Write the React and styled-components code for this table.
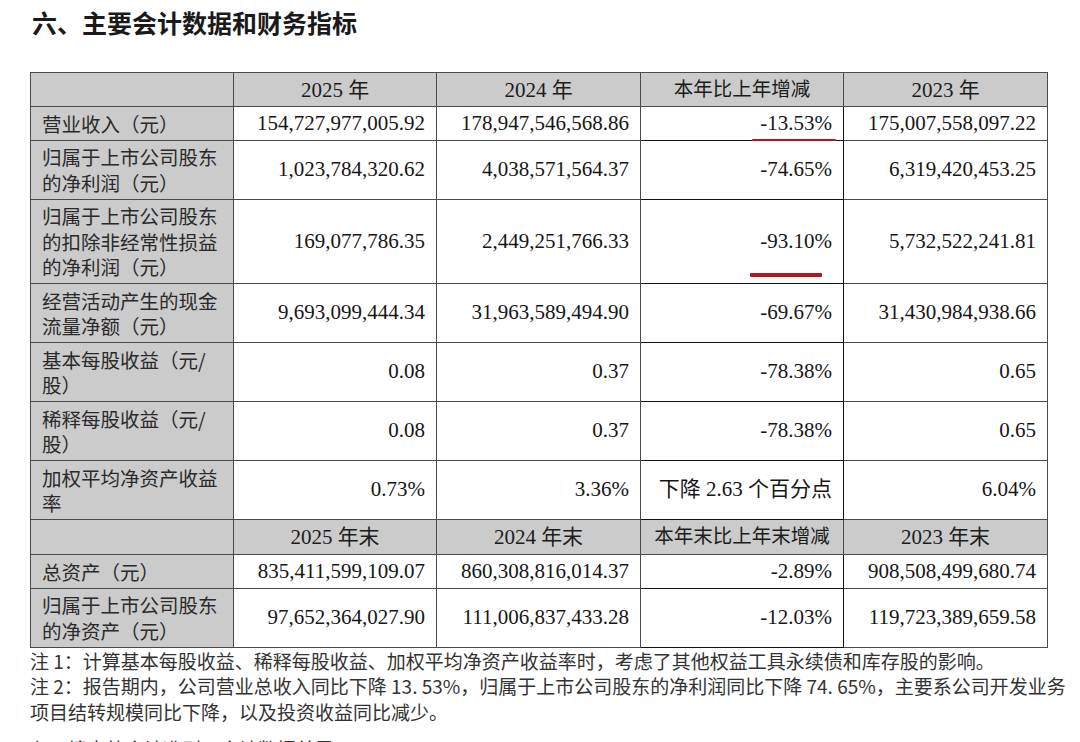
import styled, { createGlobalStyle } from 'styled-components';

const GlobalStyle = createGlobalStyle`
  html, body {
    margin: 0;
    padding: 0;
    background: #ffffff;
    overflow: hidden;
  }
`

const Page = styled.div`
  width: 1080px;
  height: 742px;
  overflow: hidden;
  padding: 0 33px 0 30px;
  box-sizing: border-box;
  font-family: "Liberation Serif", "Noto Sans CJK SC", serif;
  color: #161616;
`

const Title = styled.h1`
  margin: 0;
  padding: 6px 0 0 2px;
  height: 72px;
  box-sizing: border-box;
  font-family: "Noto Sans CJK SC", sans-serif;
  font-size: 25px;
  line-height: 32px;
  font-weight: 700;
  color: #1a1a1a;
`

const Table = styled.table`
  width: 1017px;
  border-collapse: collapse;
  table-layout: fixed;
  font-size: 21px;
`

const HeadCell = styled.th`
  background: #cbcbcb;
  border: 1px solid #4a4a4a;
  font-weight: 400;
  font-size: ${p => (p.$cn ? '19.5px' : '21px')};
  text-align: center;
  line-height: 26px;
  height: ${p => p.$h}px;
  box-sizing: border-box;
  padding: 3px 8px;
  color: #1c1c1c;
  white-space: nowrap;
`

const LabelCell = styled.td`
  background: #cbcbcb;
  border: 1px solid #4a4a4a;
  text-align: left;
  font-family: "Noto Sans CJK SC", sans-serif;
  font-size: 19.5px;
  line-height: 25.5px;
  padding: 3.5px 6px 3.5px 11px;
  color: #2a2a2a;
  white-space: nowrap;
`

const LabelLine = styled.div`
  height: 25.5px;
`

const NumCell = styled.td`
  position: relative;
  background: #ffffff;
  border: 1px solid ${p => (p.$dark ? '#111' : '#4a4a4a')};
  text-align: right;
  vertical-align: middle;
  line-height: 25.5px;
  padding: 3.5px 11px;
  white-space: nowrap;
`

const Mark = styled.span`
  position: absolute;
  height: 4px;
  background: #b8141f;
  border-radius: 1px;
  right: ${p => p.$right}px;
  bottom: ${p => p.$bottom}px;
  width: ${p => p.$width}px;
`

const Notes = styled.div`
  font-family: "Noto Sans CJK SC", sans-serif;
  font-size: 19px;
  line-height: 25.5px;
  color: #333;
  white-space: nowrap;
`

const NextHeading = styled.div`
  margin-top: 12px;
  font-family: "Noto Sans CJK SC", sans-serif;
  font-size: 19px;
  line-height: 26px;
  color: #333;
`

const rowsA = [
  { label: ['营业收入（元）'], v: ['154,727,977,005.92', '178,947,546,568.86', '-13.53%', '175,007,558,097.22'], mark: { right: 7, bottom: -3, width: 84 } },
  { label: ['归属于上市公司股东', '的净利润（元）'], v: ['1,023,784,320.62', '4,038,571,564.37', '-74.65%', '6,319,420,453.25'] },
  { label: ['归属于上市公司股东', '的扣除非经常性损益', '的净利润（元）'], v: ['169,077,786.35', '2,449,251,766.33', '-93.10%', '5,732,522,241.81'], mark: { right: 21, bottom: 6, width: 72 } },
  { label: ['经营活动产生的现金', '流量净额（元）'], v: ['9,693,099,444.34', '31,963,589,494.90', '-69.67%', '31,430,984,938.66'] },
  { label: ['基本每股收益（元/', '股）'], v: ['0.08', '0.37', '-78.38%', '0.65'] },
  { label: ['稀释每股收益（元/', '股）'], v: ['0.08', '0.37', '-78.38%', '0.65'] },
  { label: ['加权平均净资产收益', '率'], v: ['0.73%', '3.36%', '下降 2.63 个百分点', '6.04%'] },
];

const rowsB = [
  { label: ['总资产（元）'], v: ['835,411,599,109.07', '860,308,816,014.37', '-2.89%', '908,508,499,680.74'] },
  { label: ['归属于上市公司股东', '的净资产（元）'], v: ['97,652,364,027.90', '111,006,837,433.28', '-12.03%', '119,723,389,659.58'] },
];

function Row({ row }) {
  return (
    <tr>
      <LabelCell>
        {row.label.map((l, i) => <LabelLine key={i}>{l}</LabelLine>)}
      </LabelCell>
      {row.v.map((val, i) => (
        <NumCell key={i} $dark={i === 2}>
          {val}
          {i === 2 && row.mark && <Mark $right={row.mark.right} $bottom={row.mark.bottom} $width={row.mark.width}/>}
        </NumCell>
      ))}
    </tr>
  );
}

function HeadRow({ cols, h }) {
  return (
    <tr>
      <HeadCell $h={h}></HeadCell>
      {cols.map((c, i) => <HeadCell key={i} $h={h} $cn={i === 2}>{c}</HeadCell>)}
    </tr>
  );
}

function App() {
  return (
    <Page>
      <GlobalStyle/>
      <Title>六、主要会计数据和财务指标</Title>
      <Table>
        <colgroup>
          <col style={{width: 203}}/>
          <col style={{width: 203}}/>
          <col style={{width: 204}}/>
          <col style={{width: 203}}/>
          <col style={{width: 204}}/>
        </colgroup>
        <tbody>
          <HeadRow h={34} cols={['2025 年', '2024 年', '本年比上年增减', '2023 年']}/>
          {rowsA.map((r, i) => <Row key={i} row={r}/>)}
          <HeadRow h={35} cols={['2025 年末', '2024 年末', '本年末比上年末增减', '2023 年末']}/>
          {rowsB.map((r, i) => <Row key={i} row={r}/>)}
        </tbody>
      </Table>
      <Notes>
        <div>注 1：计算基本每股收益、稀释每股收益、加权平均净资产收益率时，考虑了其他权益工具永续债和库存股的影响。</div>
        <div>注 2：报告期内，公司营业总收入同比下降 13. 53%，归属于上市公司股东的净利润同比下降 74. 65%，主要系公司开发业务</div>
        <div>项目结转规模同比下降，以及投资收益同比减少。</div>
      </Notes>
      <NextHeading>七、境内外会计准则下会计数据差异</NextHeading>
    </Page>
  );
}

export default App;
